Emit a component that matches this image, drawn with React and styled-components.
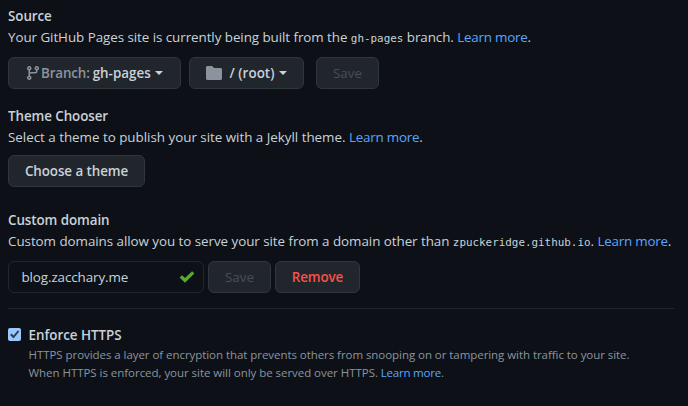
import React from 'react';
import styled, { createGlobalStyle } from 'styled-components';

const Global = createGlobalStyle`
  * { box-sizing: border-box; }
  body { margin: 0; background: #0d1117; }
`;

const Page = styled.main`
  width: 688px;
  height: 406px;
  padding: 6px 14px 0 8px;
  overflow: hidden;
  background: #0d1117;
  color: #c9d1d9;
  font: 13.4px/21px 'Open Sans', 'Noto Sans', sans-serif;
  white-space: nowrap;
`;

const Section = styled.section`
  height: ${(p) => p.$height}px;
`;

const Heading = styled.h2`
  margin: 0;
  font-size: inherit;
  line-height: 21px;
  font-weight: 650;
  letter-spacing: ${(p) => p.$tracking ?? -0.08}px;
`;

const Description = styled.p`
  margin: 0;
  letter-spacing: ${(p) => p.$tracking ?? -0.06}px;
`;

const Code = styled.code`
  font: 10.9px/1 'DejaVu Sans Mono', monospace;
  letter-spacing: 0;
`;

const Link = styled.a`
  color: #58a6ff;
  letter-spacing: -0.22px;
`;

const Controls = styled.div`
  display: flex;
  margin-top: ${(p) => p.$top}px;
`;

const Button = styled.button`
  display: flex;
  align-items: center;
  justify-content: ${(p) => (p.$start ? 'flex-start' : 'center')};
  width: ${(p) => p.$width}px;
  height: 32px;
  margin: 0 ${(p) => p.$gap ?? 0}px 0 0;
  padding: 0 0 1px ${(p) => p.$start ?? 0}px;
  border: 1px solid #30363d;
  border-radius: 6px;
  background: #21262d;
  color: ${(p) => (p.$danger ? '#f85149' : p.disabled ? '#484f58' : '#c9d1d9')};
  font: ${(p) => (p.disabled ? 500 : 650)} 13.4px/20px 'Open Sans', 'Noto Sans', sans-serif;
  letter-spacing: ${(p) => p.$tracking ?? 0}px;
`;

const Muted = styled.span`
  margin-right: 3px;
  color: #8b949e;
  font-weight: 550;
  letter-spacing: -0.15px;
`;

const Caret = styled.span`
  margin: 1px 0 0 4px;
  border: 4px solid transparent;
  border-top-color: #c9d1d9;
  border-bottom: 0;
`;

const Icon = styled.svg`
  flex: none;
  fill: ${(p) => p.$color ?? '#8b949e'};
  margin-right: ${(p) => p.$gap ?? 0}px;
`;

const DomainField = styled.div`
  display: flex;
  align-items: center;
  justify-content: space-between;
  width: 196px;
  height: 32px;
  margin-right: 4px;
  padding: 0 8px 0 12.5px;
  border: 1px solid #21262d;
  border-radius: 6px;
  letter-spacing: -0.1px;
`;

const Divider = styled.hr`
  height: 1px;
  margin: 15px 0 16px;
  border: 0;
  background: #21262d;
`;

const Option = styled.div`
  display: grid;
  grid-template-columns: 13px 1fr;
  column-gap: 7.5px;
`;

const Checkbox = styled.span`
  display: flex;
  align-items: center;
  justify-content: center;
  width: 13px;
  height: 13px;
  margin-top: 3px;
  border-radius: 2px;
  background: #99c8ff;
`;

const Note = styled.p`
  margin: 0;
  color: #8b949e;
  font-size: 11.5px;
  line-height: 18px;
  letter-spacing: ${(p) => p.$tracking ?? -0.055}px;
`;

export default function App() {
  return (
    <>
      <Global />
      <Page>
        <Section $height={100}>
          <Heading>Source</Heading>
          <Description>
            Your GitHub Pages site is currently being built from the <Code>gh-pages</Code> branch. <Link>Learn more</Link>.
          </Description>
          <Controls $top={9}>
            <Button $width={173} $gap={8} $start={16}>
              <Icon width="16" height="16" viewBox="0 0 16 16">
                <path fillRule="evenodd" d="M11.75 2.5a.75.75 0 100 1.5.75.75 0 000-1.5zm-2.25.75a2.25 2.25 0 113 2.122V6A2.5 2.5 0 0110 8.5H6a1 1 0 00-1 1v1.128a2.251 2.251 0 11-1.5 0V5.372a2.25 2.25 0 111.5 0v1.836A2.492 2.492 0 016 7h4a1 1 0 001-1v-.628A2.25 2.25 0 019.5 3.25zM4.25 12a.75.75 0 100 1.5.75.75 0 000-1.5zM3.5 3.25a.75.75 0 111.5 0 .75.75 0 01-1.5 0z" />
              </Icon>
              <Muted>Branch:</Muted>
              <span>gh-pages</span>
              <Caret />
            </Button>
            <Button $width={115} $gap={12} $start={16} $tracking={0.05}>
              <Icon width="16" height="14" viewBox="0 0 16 14" $gap={7.5}>
                <path d="M1.5 0h4c.6 0 1 .2 1.3.6l.8 1c.2.3.5.4.8.4h6.1c.8 0 1.5.7 1.5 1.5v9c0 .8-.7 1.5-1.5 1.5h-13C.7 14 0 13.3 0 12.500V1.500C0 .7.7 0 1.500 0z" />
              </Icon>
              <span>/ (root)</span>
              <Caret />
            </Button>
            <Button $width={63} disabled>Save</Button>
          </Controls>
        </Section>

        <Section $height={104}>
          <Heading>Theme Chooser</Heading>
          <Description $tracking={-0.02}>
            Select a theme to publish your site with a Jekyll theme. <Link>Learn more</Link>.
          </Description>
          <Controls $top={7}>
            <Button $width={137} $tracking={-0.08}>Choose a theme</Button>
          </Controls>
        </Section>

        <Section $height={83}>
          <Heading>Custom domain</Heading>
          <Description $tracking={-0.05}>
            Custom domains allow you to serve your site from a domain other than <Code>zpuckeridge.github.io</Code>. <Link>Learn more</Link>.
          </Description>
          <Controls $top={9}>
            <DomainField>
              <span>blog.zacchary.me</span>
              <Icon width="16" height="12" viewBox="0 0 16 12" $color="#57ab2e">
                <path d="M.6 6.500 3 4.200l3 2.900L13.100.2l2.300 2.200L6 11.700z" />
              </Icon>
            </DomainField>
            <Button $width={63} $gap={4} disabled>Save</Button>
            <Button $width={85} $danger $tracking={-0.1}>Remove</Button>
          </Controls>
        </Section>

        <Divider />

        <Option>
          <Checkbox>
            <Icon width="11" height="11" viewBox="0 0 11 11" $color="#343c47">
              <path d="M1 6.100 2.500 4.500l2 2L8.900 1.300l1.300 1.100-5.600 7z" />
            </Icon>
          </Checkbox>
          <div>
            <Heading $tracking={-0.03}>Enforce HTTPS</Heading>
            <Note>HTTPS provides a layer of encryption that prevents others from snooping on or tampering with traffic to your site.</Note>
            <Note $tracking={-0.04}>
              When HTTPS is enforced, your site will only be served over HTTPS. <Link>Learn more</Link>.
            </Note>
          </div>
        </Option>
      </Page>
    </>
  );
}
